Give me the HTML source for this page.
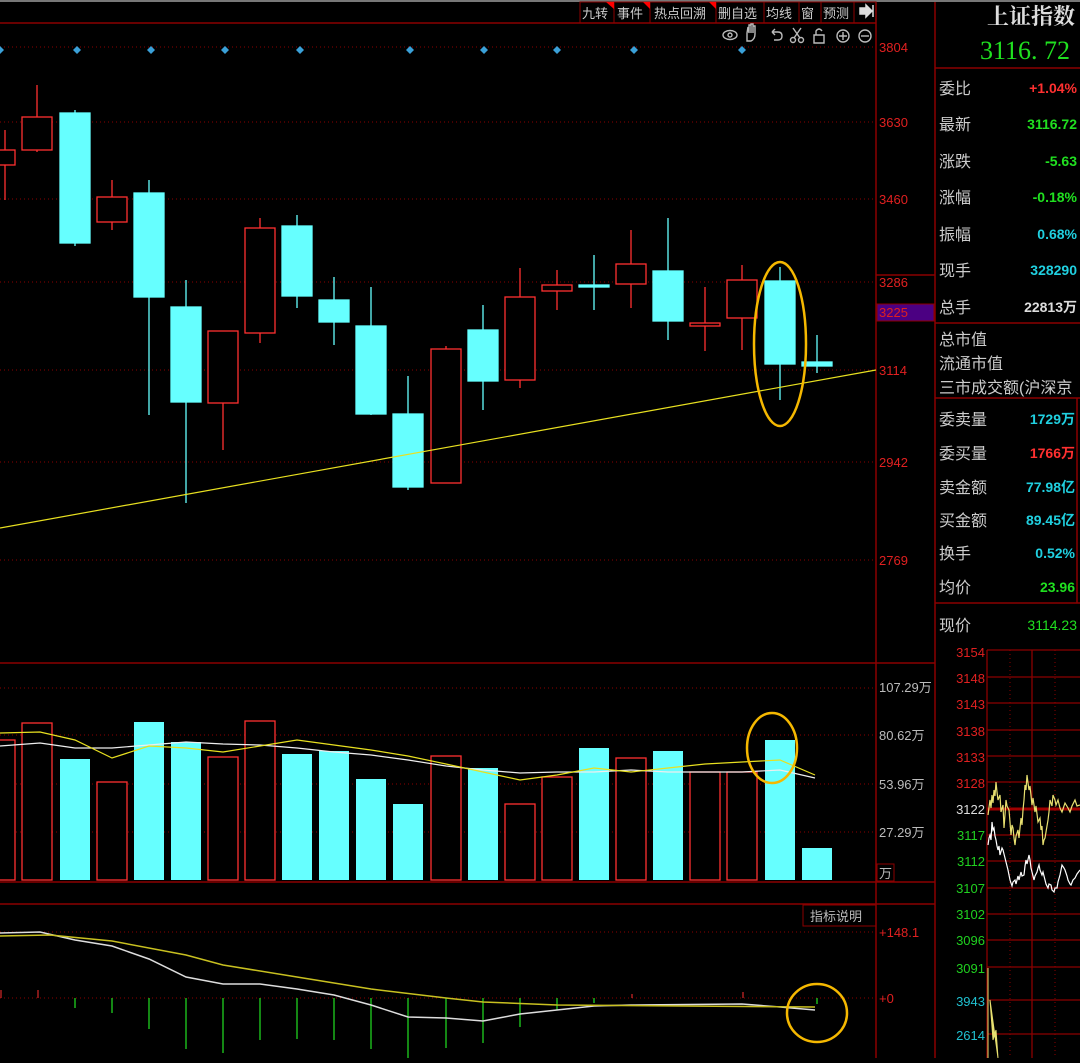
<!DOCTYPE html>
<html><head><meta charset="utf-8"><style>
body{margin:0;background:#000;width:1080px;height:1058px;overflow:hidden;font-family:"Liberation Sans","Noto Sans CJK SC",sans-serif}
svg text{font-family:"Liberation Sans","Noto Sans CJK SC",sans-serif}
svg text.serif{font-family:"Liberation Serif","Noto Serif CJK SC",serif}
</style></head><body>
<svg width="1080" height="1058" viewBox="0 0 1080 1058" xmlns="http://www.w3.org/2000/svg">
<rect width="1080" height="1058" fill="#000"/>
<g stroke="#8b0000" stroke-width="1.5" fill="none">
<line x1="0" y1="23" x2="876" y2="23"/>
<line x1="876" y1="0" x2="876" y2="1058"/>
<line x1="935" y1="0" x2="935" y2="1058"/>
<line x1="0" y1="663" x2="935" y2="663"/>
<line x1="0" y1="882" x2="935" y2="882"/>
<line x1="0" y1="904" x2="935" y2="904"/>
<line x1="935" y1="68" x2="1080" y2="68"/>
<line x1="935" y1="323" x2="1080" y2="323"/>
<line x1="935" y1="398" x2="1080" y2="398"/>
<line x1="935" y1="603" x2="1080" y2="603"/>
<line x1="1077" y1="398" x2="1077" y2="603"/>
<line x1="876" y1="275" x2="935" y2="275"/>
</g>
<line x1="0" y1="1" x2="1080" y2="1" stroke="#777" stroke-width="2"/>
<g stroke="#8b0000" fill="none"><rect x="580" y="2" width="34" height="21"/><rect x="614" y="2" width="36" height="21"/><rect x="650" y="2" width="66" height="21"/><rect x="716" y="2" width="48" height="21"/><rect x="764" y="2" width="35" height="21"/><rect x="799" y="2" width="22" height="21"/><rect x="821" y="2" width="33" height="21"/><rect x="854" y="2" width="22" height="21"/></g>
<g fill="#f00"><polygon points="606,2 614,2 614,9"/><polygon points="643,2 650,2 650,9"/><polygon points="709,2 716,2 716,9"/></g>
<g fill="#ccc" font-size="13"><text x="582" y="18">九转</text><text x="617" y="18">事件</text><text x="654" y="18">热点回溯</text><text x="718" y="18">删自选</text><text x="766" y="18">均线</text><text x="801" y="18">窗</text><text x="823" y="18">预测</text></g>
<path d="M860 8h6v-3l6 6-6 6v-3h-6z M873 5v12" fill="#ddd" stroke="#ddd" stroke-width="1.5"/>
<g stroke="#bbb" fill="none" stroke-width="1.4">
<ellipse cx="730" cy="35" rx="7" ry="4.5"/><circle cx="730" cy="35" r="2"/>
<path d="M747 41v-8l1-6 1 6v-8l2 0v8v-9l2 0v9v-7l2 0v8q0 5-4 7h-3z"/>
<path d="M772 32h6q4 0 4 4t-4 4h-4M772 32l3-3M772 32l3 3"/>
<circle cx="793" cy="40" r="2.5"/><circle cx="801" cy="40" r="2.5"/><path d="M794 38l7-10M800 38l-7-10"/>
<path d="M814 35h10v8h-10zM816 35v-4q3-4 6 0"/>
<circle cx="843" cy="36" r="6"/><path d="M839 36h8M843 32v8"/>
<circle cx="865" cy="36" r="6"/><path d="M861 36h8"/>
</g>
<g stroke="#8b0000" stroke-dasharray="1,3"><line x1="0" y1="47" x2="876" y2="47"/><line x1="0" y1="122" x2="876" y2="122"/><line x1="0" y1="199" x2="876" y2="199"/><line x1="0" y1="282" x2="876" y2="282"/><line x1="0" y1="370" x2="876" y2="370"/><line x1="0" y1="462" x2="876" y2="462"/><line x1="0" y1="560" x2="876" y2="560"/>
<line x1="0" y1="688" x2="876" y2="688"/><line x1="0" y1="735" x2="876" y2="735"/><line x1="0" y1="784" x2="876" y2="784"/><line x1="0" y1="832" x2="876" y2="832"/><line x1="0" y1="932" x2="876" y2="932"/><line x1="0" y1="998" x2="876" y2="998"/></g>
<g fill="#e02020" font-size="13"><text x="879" y="52">3804</text><text x="879" y="127">3630</text><text x="879" y="204">3460</text><text x="879" y="287">3286</text><text x="879" y="375">3114</text><text x="879" y="467">2942</text><text x="879" y="565">2769</text><text x="879" y="937">+148.1</text><text x="879" y="1003">+0</text></g>
<rect x="877" y="304" width="57" height="17" fill="#4b0082" stroke="#8b0000"/><text x="879" y="317" fill="#e02020" font-size="13">3225</text>
<g fill="#bbb" font-size="13"><text x="879" y="692">107.29万</text><text x="879" y="740">80.62万</text><text x="879" y="789">53.96万</text><text x="879" y="837">27.29万</text><text x="879" y="878">万</text></g>
<rect x="877" y="864" width="17" height="17" fill="none" stroke="#8b0000"/>
<rect x="803" y="905" width="73" height="21" fill="none" stroke="#8b0000"/><text x="810" y="921" fill="#bbb" font-size="13">指标说明</text>
<g fill="#3aa0d8"><path d="M0 46l4 4-4 4-4-4z"/><path d="M77 46l4 4-4 4-4-4z"/><path d="M151 46l4 4-4 4-4-4z"/><path d="M225 46l4 4-4 4-4-4z"/><path d="M300 46l4 4-4 4-4-4z"/><path d="M410 46l4 4-4 4-4-4z"/><path d="M484 46l4 4-4 4-4-4z"/><path d="M557 46l4 4-4 4-4-4z"/><path d="M634 46l4 4-4 4-4-4z"/><path d="M742 46l4 4-4 4-4-4z"/></g>
<g stroke-width="1.3">
<g stroke="#ff3030" fill="#000">
<line x1="5" y1="130" x2="5" y2="200"/><rect x="-10" y="150" width="25" height="15"/>
<line x1="37" y1="85" x2="37" y2="152"/><rect x="22" y="117" width="30" height="33"/>
<line x1="112" y1="180" x2="112" y2="230"/><rect x="97" y="197" width="30" height="25"/>
<line x1="223" y1="331" x2="223" y2="450"/><rect x="208" y="331" width="30" height="72"/>
<line x1="260" y1="218" x2="260" y2="343"/><rect x="245" y="228" width="30" height="105"/>
<line x1="446" y1="346" x2="446" y2="483"/><rect x="431" y="349" width="30" height="134"/>
<line x1="520" y1="268" x2="520" y2="388"/><rect x="505" y="297" width="30" height="83"/>
<line x1="557" y1="270" x2="557" y2="310"/><rect x="542" y="285" width="30" height="6"/>
<line x1="631" y1="230" x2="631" y2="308"/><rect x="616" y="264" width="30" height="20"/>
<line x1="705" y1="287" x2="705" y2="351"/><rect x="690" y="323" width="30" height="3"/>
<line x1="742" y1="265" x2="742" y2="350"/><rect x="727" y="280" width="30" height="38"/>
</g>
<g stroke="#66ffff" fill="#66ffff">
<line x1="75" y1="110" x2="75" y2="246"/><rect x="60" y="113" width="30" height="130"/>
<line x1="149" y1="180" x2="149" y2="415"/><rect x="134" y="193" width="30" height="104"/>
<line x1="186" y1="280" x2="186" y2="503"/><rect x="171" y="307" width="30" height="95"/>
<line x1="297" y1="215" x2="297" y2="308"/><rect x="282" y="226" width="30" height="70"/>
<line x1="334" y1="277" x2="334" y2="345"/><rect x="319" y="300" width="30" height="22"/>
<line x1="371" y1="287" x2="371" y2="415"/><rect x="356" y="326" width="30" height="88"/>
<line x1="408" y1="376" x2="408" y2="490"/><rect x="393" y="414" width="30" height="73"/>
<line x1="483" y1="305" x2="483" y2="410"/><rect x="468" y="330" width="30" height="51"/>
<line x1="594" y1="255" x2="594" y2="310"/><rect x="579" y="285" width="30" height="2"/>
<line x1="668" y1="218" x2="668" y2="340"/><rect x="653" y="271" width="30" height="50"/>
<line x1="780" y1="267" x2="780" y2="400"/><rect x="765" y="281" width="30" height="83"/>
<line x1="817" y1="335" x2="817" y2="373"/><rect x="802" y="362" width="30" height="4"/>
</g></g>
<line x1="0" y1="528" x2="876" y2="370" stroke="#e8e020" stroke-width="1.2"/>
<ellipse cx="780" cy="344" rx="26" ry="82" fill="none" stroke="#f5b800" stroke-width="2.5"/>
<g stroke="#ff3030" fill="#000" stroke-width="1.3">
<rect x="-10" y="740" width="25" height="140"/><rect x="22" y="723" width="30" height="157"/><rect x="97" y="782" width="30" height="98"/><rect x="208" y="757" width="30" height="123"/><rect x="245" y="721" width="30" height="159"/><rect x="431" y="756" width="30" height="124"/><rect x="505" y="804" width="30" height="76"/><rect x="542" y="777" width="30" height="103"/><rect x="616" y="758" width="30" height="122"/><rect x="690" y="772" width="30" height="108"/><rect x="727" y="772" width="30" height="108"/></g>
<g fill="#66ffff">
<rect x="60" y="759" width="30" height="121"/><rect x="134" y="722" width="30" height="158"/><rect x="171" y="742" width="30" height="138"/><rect x="282" y="754" width="30" height="126"/><rect x="319" y="751" width="30" height="129"/><rect x="356" y="779" width="30" height="101"/><rect x="393" y="804" width="30" height="76"/><rect x="468" y="768" width="30" height="112"/><rect x="579" y="748" width="30" height="132"/><rect x="653" y="751" width="30" height="129"/><rect x="765" y="740" width="30" height="140"/><rect x="802" y="848" width="30" height="32"/></g>
<polyline fill="none" stroke="#eee" stroke-width="1.2" points="0,746 40,743 75,748 112,748 149,745 186,742 223,744 260,745 297,748 334,752 371,755 408,760 446,766 483,770 520,773 557,772 594,772 631,770 668,772 705,772 742,772 780,770 815,778"/>
<polyline fill="none" stroke="#e8e020" stroke-width="1.2" points="0,733 40,732 75,740 112,758 149,746 186,748 223,752 260,746 297,740 334,745 371,750 408,756 446,764 483,772 520,780 557,775 594,768 631,772 668,768 705,764 742,762 780,760 815,775"/>
<ellipse cx="772" cy="748" rx="25" ry="35" fill="none" stroke="#f5b800" stroke-width="2.5"/>
<g stroke="#ff3030"><line x1="1" y1="990" x2="1" y2="998"/><line x1="38" y1="990" x2="38" y2="998"/><line x1="632" y1="994" x2="632" y2="998"/><line x1="743" y1="992" x2="743" y2="998"/></g>
<g stroke="#20d020" stroke-width="1.3"><line x1="75" y1="998" x2="75" y2="1008"/><line x1="112" y1="998" x2="112" y2="1013"/><line x1="149" y1="998" x2="149" y2="1029"/><line x1="186" y1="998" x2="186" y2="1049"/><line x1="223" y1="998" x2="223" y2="1053"/><line x1="260" y1="998" x2="260" y2="1040"/><line x1="297" y1="998" x2="297" y2="1039"/><line x1="334" y1="998" x2="334" y2="1040"/><line x1="371" y1="998" x2="371" y2="1049"/><line x1="408" y1="998" x2="408" y2="1058"/><line x1="446" y1="998" x2="446" y2="1048"/><line x1="483" y1="998" x2="483" y2="1043"/><line x1="520" y1="998" x2="520" y2="1027"/><line x1="557" y1="998" x2="557" y2="1010"/><line x1="594" y1="998" x2="594" y2="1003"/><line x1="817" y1="998" x2="817" y2="1004"/></g>
<polyline fill="none" stroke="#ddd" stroke-width="1.5" points="0,933 40,932 75,940 112,946 149,959 186,977 223,984 260,984 297,989 334,995 371,1005 408,1017 446,1018 483,1021 520,1014 557,1010 594,1006 631,1005 742,1004 780,1007 815,1010"/>
<polyline fill="none" stroke="#c8c020" stroke-width="1.5" points="0,936 50,935 112,941 186,955 223,965 297,977 371,989 446,998 483,1002 557,1005 815,1007"/>
<ellipse cx="817" cy="1013" rx="30" ry="29" fill="none" stroke="#f5b800" stroke-width="2.5"/>
<text class="serif" x="1075" y="24" fill="#ddd" font-size="22" font-weight="bold" text-anchor="end">上证指数</text>
<text class="serif" x="1070" y="59" fill="#20e020" font-size="26" text-anchor="end">3116. 72</text>
<g fill="#ccc" font-size="16"><text x="939" y="94">委比</text><text x="939" y="130">最新</text><text x="939" y="167">涨跌</text><text x="939" y="203">涨幅</text><text x="939" y="240">振幅</text><text x="939" y="276">现手</text><text x="939" y="313">总手</text><text x="939" y="345">总市值</text><text x="939" y="369">流通市值</text><text x="939" y="393">三市成交额(沪深京</text><text x="939" y="425">委卖量</text><text x="939" y="459">委买量</text><text x="939" y="493">卖金额</text><text x="939" y="526">买金额</text><text x="939" y="559">换手</text><text x="939" y="593">均价</text><text x="939" y="631">现价</text></g>
<g font-size="14" font-weight="bold" text-anchor="end">
<text x="1077" y="93" fill="#ff3030">+1.04%</text><text x="1077" y="129" fill="#20e020">3116.72</text><text x="1077" y="166" fill="#20e020">-5.63</text><text x="1077" y="202" fill="#20e020">-0.18%</text><text x="1077" y="239" fill="#20d0e0">0.68%</text><text x="1077" y="275" fill="#20d0e0">328290</text><text x="1077" y="312" fill="#ddd">22813万</text><text x="1075" y="424" fill="#20d0e0">1729万</text><text x="1075" y="458" fill="#ff3030">1766万</text><text x="1075" y="492" fill="#20d0e0">77.98亿</text><text x="1075" y="525" fill="#20d0e0">89.45亿</text><text x="1075" y="558" fill="#20d0e0">0.52%</text><text x="1075" y="592" fill="#20e020">23.96</text><text x="1077" y="630" fill="#20e020" font-weight="normal">3114.23</text></g>
<g stroke="#8b0000" stroke-width="1.3"><line x1="987" y1="650" x2="987" y2="1058"/><line x1="987" y1="650" x2="1080" y2="650"/><line x1="987" y1="677" x2="1080" y2="677"/><line x1="987" y1="703" x2="1080" y2="703"/><line x1="987" y1="730" x2="1080" y2="730"/><line x1="987" y1="756" x2="1080" y2="756"/><line x1="987" y1="782" x2="1080" y2="782"/><line x1="987" y1="835" x2="1080" y2="835"/><line x1="987" y1="861" x2="1080" y2="861"/><line x1="987" y1="888" x2="1080" y2="888"/><line x1="987" y1="914" x2="1080" y2="914"/><line x1="987" y1="940" x2="1080" y2="940"/><line x1="987" y1="967" x2="1080" y2="967"/><line x1="987" y1="1000" x2="1080" y2="1000"/><line x1="987" y1="1034" x2="1080" y2="1034"/><line x1="1032" y1="650" x2="1032" y2="1058"/></g>
<line x1="987" y1="809" x2="1080" y2="809" stroke="#a00000" stroke-width="3"/>
<g stroke="#8b0000" stroke-dasharray="1,3"><line x1="1010" y1="650" x2="1010" y2="1058"/><line x1="1055" y1="650" x2="1055" y2="1058"/></g>
<g font-size="13" text-anchor="end"><g fill="#e02020"><text x="985" y="657">3154</text><text x="985" y="683">3148</text><text x="985" y="709">3143</text><text x="985" y="736">3138</text><text x="985" y="762">3133</text><text x="985" y="788">3128</text></g><text x="985" y="814" fill="#ddd">3122</text><g fill="#20d020"><text x="985" y="840">3117</text><text x="985" y="866">3112</text><text x="985" y="893">3107</text><text x="985" y="919">3102</text><text x="985" y="945">3096</text><text x="985" y="973">3091</text></g><g fill="#20c0d0"><text x="985" y="1006">3943</text><text x="985" y="1040">2614</text></g></g>
<polyline fill="none" stroke="#e8e070" stroke-width="1.2" points="988,815 990,800 991,808 992,795 993,803 994,790 995,796 996,782 997,792 998,800 1000,795 1001,812 1003,805 1004,828 1005,815 1006,800 1007,806 1009,810 1010,822 1011,835 1012,825 1013,828 1014,838 1015,845 1016,836 1018,830 1019,838 1021,818 1022,825 1023,810 1024,800 1025,785 1026,790 1027,775 1028,783 1029,790 1030,786 1032,805 1033,798 1035,812 1036,806 1038,822 1040,818 1041,830 1042,826 1043,845 1044,840 1045,838 1047,826 1048,820 1049,812 1050,800 1052,806 1053,795 1055,800 1056,805 1058,800 1060,808 1062,812 1065,803 1068,808 1070,812 1072,806 1075,800 1077,806 1080,805"/>
<polyline fill="none" stroke="#fff" stroke-width="1.2" points="988,845 989,838 990,835 991,840 992,822 993,830 994,828 995,836 996,840 997,846 998,850 999,846 1000,855 1002,848 1003,850 1005,858 1006,862 1008,870 1009,875 1010,880 1012,886 1013,882 1015,880 1016,884 1018,876 1019,880 1021,872 1022,876 1024,875 1025,866 1026,860 1027,864 1029,855 1030,860 1031,868 1032,872 1034,880 1035,876 1037,872 1038,868 1039,865 1040,870 1042,875 1043,872 1045,880 1046,884 1048,888 1049,884 1051,885 1052,890 1054,892 1055,888 1057,888 1058,882 1060,875 1061,870 1062,865 1064,868 1065,870 1067,876 1068,880 1070,884 1071,885 1073,880 1075,878 1077,874 1080,870"/>
<path d="M988 968V1058M990 1000L993 1040L996 1030L998 1058Z" stroke="#e8e070" fill="#e8e070" stroke-width="1"/>
</svg>
</body></html>
